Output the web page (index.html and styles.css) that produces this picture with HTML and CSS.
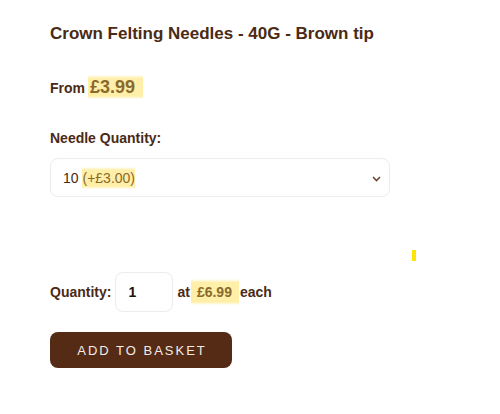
FILE: index.html
```html
<!DOCTYPE html>
<html>
<head>
<meta charset="utf-8">
<link rel="stylesheet" href="styles.css">
</head>
<body>
<div class="product">
  <h1 class="title">Crown Felting Needles - 40G - Brown tip</h1>
  <p class="from">From <span class="hl big">£3.99</span></p>
  <label class="label">Needle Quantity:</label>
  <div class="select">
    <span class="sel-text">10 <span class="hl opt">(+£3.00)</span></span>
    <svg class="chev" width="9" height="6" viewBox="0 0 9 6"><path d="M1 1 L4.5 4.5 L8 1" fill="none" stroke="#6b4a34" stroke-width="1.6"/></svg>
  </div>
  <div class="spacer"><span class="mark"></span></div>
  <div class="qty-row">
    <span class="qlabel">Quantity:</span>
    <div class="qbox">1</div>
    <span class="at">at</span>
    <span class="hl price">£6.99</span>
    <span class="each">each</span>
  </div>
  <button class="btn">ADD TO BASKET</button>
</div>
</body>
</html>
```
FILE: styles.css
```css
html, body { margin: 0; padding: 0; background: #fff; }
body { font-family: "Liberation Sans", Arial, sans-serif; color: #4a2a14; }
.product { padding: 24px 50px 0 50px; width: 340px; }
.title { font-size: 17px; font-weight: bold; margin: 0; line-height: 20px; color: #4a2a14; }
.from { margin: 32px 0 0 0; font-size: 14px; font-weight: bold; line-height: 22px; }
.hl { background: linear-gradient(180deg, rgba(255,236,130,0) 0%, rgba(255,228,110,0.6) 14%, rgba(255,228,110,0.6) 88%, rgba(255,236,130,0) 100%); color: #8a6a2c; }
.big { font-size: 18px; padding: 2px 8px 2px 2px; margin-left: -1px; }
.label { display: block; margin-top: 30px; font-size: 14px; font-weight: bold; line-height: 18px; }
.select { margin-top: 11px; height: 39px; border: 1px solid #ececec; border-radius: 8px; display: flex; align-items: center; justify-content: space-between; padding: 0 8px 0 12px; box-sizing: border-box; }
.sel-text { font-size: 14px; color: #4a2a14; }
.opt { font-weight: normal; padding: 3px 0; }
.chev { margin-top: 2px; }
.spacer { height: 75px; position: relative; }
.mark { position: absolute; left: 362px; top: 53px; width: 4px; height: 11px; background: #ffe400; }
.qty-row { display: flex; align-items: center; font-size: 14px; font-weight: bold; height: 40px; }
.qlabel { margin-right: 4px; }
.qbox { width: 58px; height: 40px; border: 1px solid #ececec; border-radius: 8px; box-sizing: border-box; display: flex; align-items: center; padding-left: 12px; font-weight: bold; color: #1f1208; }
.at { margin-left: 4px; }
.price { margin-left: 1px; padding: 5px 7px 5px 6px; }
.each { margin-left: 1px; }
.btn { margin-top: 20px; width: 182px; height: 36px; background: #552b16; color: #f3ece6; border: none; border-radius: 8px; font-family: "Liberation Sans", Arial, sans-serif; font-size: 13px; letter-spacing: 2px; padding: 0 0 0 2px; }
```
